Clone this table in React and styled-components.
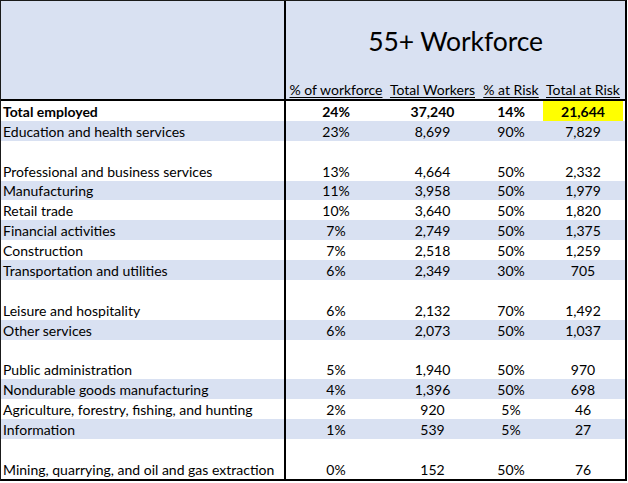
import React from "react";
import styled, { createGlobalStyle } from "styled-components";

const Global = createGlobalStyle`
  html, body { margin: 0; padding: 0; background: #ffffff; }
  body { font-family: "Lato", "Liberation Sans", sans-serif; color: #000; }
`;

const SHADE = "#D9E1F2";
const COLS = "285px 100px 93px 64px 80px";

const Sheet = styled.div`
  width: 624px;
  border-top: 1px solid #1a1a1a;
  border-left: 1px solid #1a1a1a;
  border-right: 2px solid #000;
  border-bottom: 2px solid #000;
`;

const Header = styled.div`
  display: grid;
  grid-template-columns: 285px 1fr;
  height: 98px;
  background: ${SHADE};
  border-bottom: 2px solid #000;
`;

const Corner = styled.div`
  border-right: 2px solid #000;
`;

const HeadRight = styled.div`
  display: flex;
  flex-direction: column;
`;

const Title = styled.div`
  flex: 1;
  display: flex;
  align-items: center;
  justify-content: center;
  padding-top: 1px;
  font-size: 26.5px;
  letter-spacing: -0.1px;
`;

const SubHeads = styled.div`
  display: grid;
  grid-template-columns: 100px 93px 64px 80px;
  height: 20px;
  align-items: end;
`;

const SubHead = styled.div`
  text-align: center;
  font-size: 14px;
  line-height: 16px;
  padding-bottom: 1px;
  white-space: nowrap;
  text-decoration: underline;
  text-underline-offset: 2px;
  text-decoration-thickness: 1px;
`;

const Row = styled.div`
  display: grid;
  grid-template-columns: ${COLS};
  height: 19.9px;
  background: ${(p) => (p.$shade ? SHADE : "transparent")};
  font-weight: ${(p) => (p.$bold ? 700 : 400)};
  font-size: 14px;
`;

const Label = styled.div`
  border-right: 2px solid #000;
  padding-left: 2px;
  display: flex;
  align-items: flex-end;
  padding-bottom: 1px;
  white-space: nowrap;
  line-height: 16px;
`;

const Num = styled.div`
  display: flex;
  align-items: flex-end;
  justify-content: center;
  padding-bottom: 1px;
  line-height: 16px;
  background: ${(p) => (p.$highlight ? "#FFFF00" : "transparent")};
`;

const rows = [
  { label: "Total employed", v: ["24%", "37,240", "14%", "21,644"], bold: true, hl: true },
  { label: "Education and health services", v: ["23%", "8,699", "90%", "7,829"], shade: true },
  { blank: true },
  { label: "Professional and business services", v: ["13%", "4,664", "50%", "2,332"] },
  { label: "Manufacturing", v: ["11%", "3,958", "50%", "1,979"], shade: true },
  { label: "Retail trade", v: ["10%", "3,640", "50%", "1,820"] },
  { label: "Financial activities", v: ["7%", "2,749", "50%", "1,375"], shade: true },
  { label: "Construction", v: ["7%", "2,518", "50%", "1,259"] },
  { label: "Transportation and utilities", v: ["6%", "2,349", "30%", "705"], shade: true },
  { blank: true },
  { label: "Leisure and hospitality", v: ["6%", "2,132", "70%", "1,492"] },
  { label: "Other services", v: ["6%", "2,073", "50%", "1,037"], shade: true },
  { blank: true },
  { label: "Public administration", v: ["5%", "1,940", "50%", "970"] },
  { label: "Nondurable goods manufacturing", v: ["4%", "1,396", "50%", "698"], shade: true },
  { label: "Agriculture, forestry, fishing, and hunting", v: ["2%", "920", "5%", "46"] },
  { label: "Information", v: ["1%", "539", "5%", "27"], shade: true },
  { blank: true },
  { label: "Mining, quarrying, and oil and gas extraction", v: ["0%", "152", "50%", "76"] },
];

export default function App() {
  return (
    <>
      <Global />
      <Sheet>
        <Header>
          <Corner />
          <HeadRight>
            <Title>55+ Workforce</Title>
            <SubHeads>
              <SubHead>% of workforce</SubHead>
              <SubHead>Total Workers</SubHead>
              <SubHead>% at Risk</SubHead>
              <SubHead>Total at Risk</SubHead>
            </SubHeads>
          </HeadRight>
        </Header>
        {rows.map((r, i) =>
          r.blank ? (
            <Row key={i}>
              <Label />
              <Num />
              <Num />
              <Num />
              <Num />
            </Row>
          ) : (
            <Row key={i} $shade={r.shade} $bold={r.bold}>
              <Label>{r.label}</Label>
              {r.v.map((x, j) => (
                <Num key={j} $highlight={r.hl && j === 3}>
                  {x}
                </Num>
              ))}
            </Row>
          )
        )}
      </Sheet>
    </>
  );
}
